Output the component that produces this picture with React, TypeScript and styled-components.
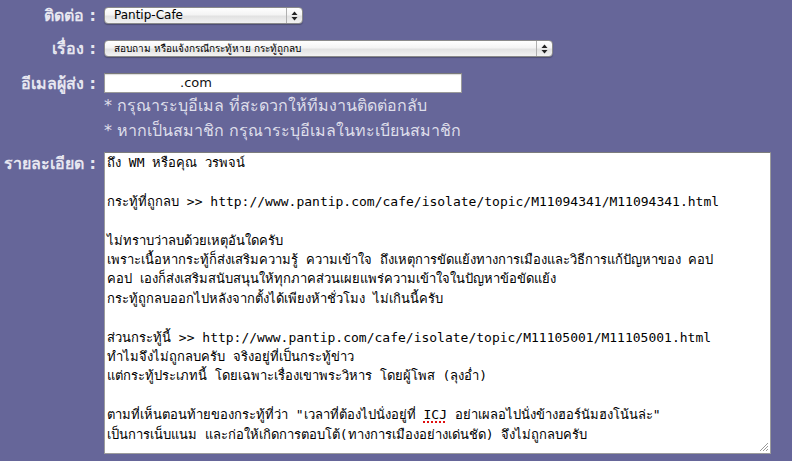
import React from 'react';
import styled, { createGlobalStyle } from 'styled-components';

const GlobalStyle = createGlobalStyle`
  html, body {
    margin: 0;
    padding: 0;
    background: #666699;
  }
  body {
    font-family: "DejaVu Sans", "Noto Sans", sans-serif;
  }
`;

const Page = styled.div`
  width: 792px;
  height: 461px;
  overflow: hidden;
  background: #666699;
  padding-top: 7px;
  box-sizing: border-box;
`;

const Row = styled.div<{ $gap?: number; $top?: boolean }>`
  display: flex;
  align-items: ${p => (p.$top ? 'flex-start' : 'center')};
  gap: 8px;
  margin-bottom: ${p => p.$gap ?? 0}px;
`;

const Label = styled.div<{ $offset?: number }>`
  width: 96px;
  flex: none;
  text-align: right;
  color: #e6e6f0;
  font-weight: bold;
  font-size: 16px;
  line-height: 17px;
  white-space: nowrap;
  margin-top: ${p => p.$offset ?? 0}px;
`;

const SelectBox = styled.div<{ $width: number; $size: number }>`
  display: flex;
  width: ${p => p.$width}px;
  height: 17px;
  box-sizing: border-box;
  border: 1px solid #8a8a8a;
  border-radius: 4px;
  background: linear-gradient(#ffffff 0%, #f4f4f4 45%, #e2e2e2 55%, #f2f2f2 100%);
  box-shadow: 0 1px 1px rgba(0, 0, 0, 0.25);
  font-size: ${p => p.$size}px;
  color: #000;
  overflow: hidden;
`;

const SelectText = styled.div`
  flex: 1;
  padding-left: 9px;
  line-height: 15px;
  white-space: nowrap;
`;

const SelectArrows = styled.div`
  width: 15px;
  border-left: 1px solid #b0b0b0;
  display: flex;
  align-items: center;
  justify-content: center;
`;

const TextInput = styled.div`
  width: 358px;
  height: 20px;
  box-sizing: border-box;
  background: #fff;
  border: 1px solid #9a9a9a;
  border-top-color: #7a7a7a;
  box-shadow: inset 0 1px 1px rgba(0, 0, 0, 0.15);
  font-size: 13px;
  line-height: 18px;
  padding-left: 75px;
  color: #111;
`;

const Hints = styled.div`
  padding-left: 104px;
  margin-bottom: 9px;
`;

const Hint = styled.div`
  color: #dedeea;
  font-size: 16px;
  line-height: 25px;
  white-space: nowrap;
`;

const TextArea = styled.div`
  position: relative;
  width: 667px;
  height: 302px;
  box-sizing: border-box;
  background: #fff;
  border: 1px solid #9c9c9c;
  border-top-color: #7c7c7c;
  padding: 0 2px;
  font-family: "DejaVu Sans Mono", "Liberation Mono", monospace;
  font-size: 13px;
  line-height: 19.4px;
  color: #000;
  white-space: pre;
  overflow: hidden;
`;

const Misspelled = styled.span`
  text-decoration: underline dotted #e01010;
  text-decoration-thickness: 2px;
  text-underline-offset: 2px;
`;

const Grip = styled.svg`
  position: absolute;
  right: 1px;
  bottom: 1px;
`;

const Arrows = () => (
  <svg width="7" height="10" viewBox="0 0 7 10">
    <path d="M3.5 0.5 L6.5 4 L0.5 4 Z" fill="#222" />
    <path d="M3.5 9.5 L6.5 6 L0.5 6 Z" fill="#222" />
  </svg>
);

const body = [
  'ถึง WM หรือคุณ วรพจน์',
  '',
  'กระทู้ที่ถูกลบ >> http://www.pantip.com/cafe/isolate/topic/M11094341/M11094341.html',
  '',
  'ไม่ทราบว่าลบด้วยเหตุอันใดครับ',
  'เพราะเนื้อหากระทู้ก็ส่งเสริมความรู้ ความเข้าใจ ถึงเหตุการขัดแย้งทางการเมืองและวิธีการแก้ปัญหาของ คอป',
  'คอป เองก็ส่งเสริมสนับสนุนให้ทุกภาคส่วนเผยแพร่ความเข้าใจในปัญหาข้อขัดแย้ง',
  'กระทู้ถูกลบออกไปหลังจากตั้งได้เพียงห้าชั่วโมง ไม่เกินนี้ครับ',
  '',
  'ส่วนกระทู้นี้ >> http://www.pantip.com/cafe/isolate/topic/M11105001/M11105001.html',
  'ทำไมจึงไม่ถูกลบครับ จริงอยู่ที่เป็นกระทู้ข่าว',
  'แต่กระทู้ประเภทนี้ โดยเฉพาะเรื่องเขาพระวิหาร โดยผู้โพส (ลุงอ่ำ)',
  '',
].join('\n');

export default function App() {
  return (
    <Page>
      <GlobalStyle />
      <Row $gap={16}>
        <Label>ติดต่อ :</Label>
        <SelectBox $width={199} $size={12}>
          <SelectText>Pantip-Cafe</SelectText>
          <SelectArrows>
            <Arrows />
          </SelectArrows>
        </SelectBox>
      </Row>

      <Row $gap={16}>
        <Label>เรื่อง :</Label>
        <SelectBox $width={449} $size={10}>
          <SelectText>สอบถาม หรือแจ้งกรณีกระทู้หาย กระทู้ถูกลบ</SelectText>
          <SelectArrows>
            <Arrows />
          </SelectArrows>
        </SelectBox>
      </Row>

      <Row>
        <Label>อีเมลผู้ส่ง :</Label>
        <TextInput>.com</TextInput>
      </Row>

      <Hints>
        <Hint>* กรุณาระบุอีเมล ที่สะดวกให้ทีมงานติดต่อกลับ</Hint>
        <Hint>* หากเป็นสมาชิก กรุณาระบุอีเมลในทะเบียนสมาชิก</Hint>
      </Hints>

      <Row $top>
        <Label $offset={3}>รายละเอียด :</Label>
        <TextArea>
          {body}
          {'\n'}
          {'ตามที่เห็นตอนท้ายของกระทู้ที่ว่า "เวลาที่ต้องไปนั่งอยู่ที่ '}
          <Misspelled>ICJ</Misspelled>
          {' อย่าเผลอไปนั่งข้างฮอร์นัมฮงโน้นล่ะ"\n'}
          {'เป็นการเน็บแนม และก่อให้เกิดการตอบโต้(ทางการเมืองอย่างเด่นชัด) จึงไม่ถูกลบครับ'}
          <Grip width="11" height="11" viewBox="0 0 11 11">
            <path d="M10 2 L2 10 M10 5 L5 10 M10 8 L8 10" stroke="#9a9a9a" strokeWidth="1" />
          </Grip>
        </TextArea>
      </Row>
    </Page>
  );
}
